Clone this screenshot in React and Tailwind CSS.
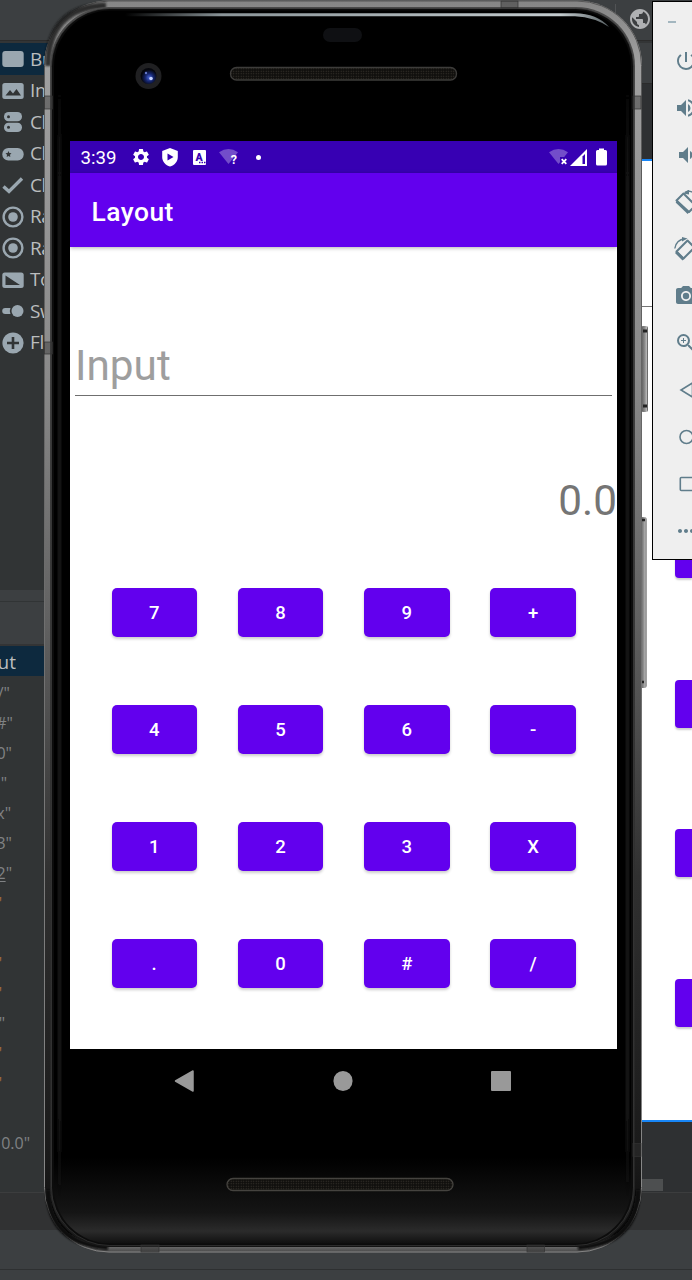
import React from "react";
import {
  MdPowerSettingsNew, MdVolumeUp, MdVolumeDown, MdPhotoCamera, MdZoomIn, MdMoreHoriz, MdPublic, MdSettings,
} from "react-icons/md";

const C = "#9aa7b0";
const BG = "#313435";

const Glyph = ({ kind }) => (
  <svg width="22" height="24" viewBox="0 0 22 24" className="shrink-0" fill={C}>
    {kind === "button" && <rect x="0.3" y="4" width="21.4" height="16" rx="3" />}
    {kind === "image" && (
      <>
        <rect x="0.3" y="4" width="21.4" height="16" rx="2.5" />
        <path d="M3.500 16.500L8 11l3 3.500 3.500-4.500 4.500 6.500z" fill={BG} />
      </>
    )}
    {kind === "group" && (
      <>
        <rect x="2" y="2" width="18" height="9.300" rx="4.600" />
        <rect x="2" y="12.700" width="18" height="9.300" rx="4.600" />
        <circle cx="6.500" cy="6.700" r="1.500" fill={BG} />
        <circle cx="6.500" cy="17.300" r="1.500" fill={BG} />
      </>
    )}
    {kind === "chip" && (
      <>
        <rect x="0.3" y="6" width="21.4" height="12.500" rx="6" />
        <path d="M6.5 9l.9 2 2.1.3-1.500 1.500.3 2.200-1.800-1-1.800 1 .3-2.200-1.500-1.500 2.100-.3z" fill={BG} />
      </>
    )}
    {kind === "check" && <path d="M1.500 13.500L7 18.500 20 5.500" fill="none" stroke={C} strokeWidth="3.400" />}
    {kind === "radio" && (
      <>
        <circle cx="11" cy="12" r="9.400" fill="none" stroke={C} strokeWidth="2.400" />
        <circle cx="11" cy="12" r="4.800" />
      </>
    )}
    {kind === "toggle" && (
      <>
        <rect x="0.3" y="4.500" width="21.4" height="15.500" rx="2.500" />
        <path d="M3.500 7.500v9.500H18z" fill={BG} />
      </>
    )}
    {kind === "switch" && (
      <>
        <path d="M3.200 9H8.500a7 7 0 0 0 0 6H3.200a3 3 0 0 1 0-6z" />
        <circle cx="15.500" cy="12" r="6" />
      </>
    )}
    {kind === "fab" && (
      <>
        <circle cx="11" cy="12" r="10.600" />
        <path d="M11 6v12M5 12h12" stroke={BG} strokeWidth="2.600" />
      </>
    )}
  </svg>
);

const palette = [
  ["button", "Button"], ["image", "ImageButton"], ["group", "ChipGroup"], ["chip", "Chip"], ["check", "CheckBox"],
  ["radio", "RadioGroup"], ["radio", "RadioButton"], ["toggle", "ToggleButton"], ["switch", "Switch"], ["fab", "FloatingActionButton"],
];

const Attr = ({ w, color = "text-[#808284]", children }) => (
  <div className="flex h-[30.05px] items-center">
    <div className={`flex shrink-0 justify-end overflow-hidden ${w} ${color}`}>{children}</div>
  </div>
);

const LeftPane = () => (
  <div className="flex w-[320px] shrink-0 flex-col bg-[#313435] font-['Open_Sans',sans-serif]">
    <div className="h-[547px] overflow-hidden">
      {palette.map(([k, label], i) => (
        <div key={i} className={`flex h-[31.5px] items-center gap-[6px] pt-px pl-[2px] text-[19px] text-[#bbbdbe] ${i === 0 ? "bg-[#0d293e]" : ""}`}>
          <Glyph kind={k} />
          <span className="-mt-px tracking-[-0.02em]">{label}</span>
        </div>
      ))}
    </div>
    <div className="h-[11px] bg-[#3c3f41]" />
    <div className="h-px bg-[#313435]" />
    <div className="h-[42px] bg-[#3c3f41]" />
    <div className="h-[2px] bg-[#333435]" />
    <div className="flex h-[30px] items-center bg-[#0d293e] pt-[2px] text-[19px] text-[#bbbdbe]">
      <div className="flex w-[16px] justify-end overflow-hidden">layout</div>
    </div>
    <div className="pt-[1.500px] text-[16px] leading-[30px]">
      <Attr w="w-[10px]">/"</Attr>
      <Attr w="w-[13px]">#"</Attr>
      <Attr w="w-[12px]">0"</Attr>
      <Attr w="w-[7px]">"</Attr>
      <Attr w="w-[11px]">x"</Attr>
      <Attr w="w-[12px]">3"</Attr>
      <Attr w="w-[12px]"><span className="underline underline-offset-2">2</span>"</Attr>
      <Attr w="w-[2px]" color="text-[#a06b3c]">"</Attr>
      <Attr w="w-0" />
      <Attr w="w-[2px]" color="text-[#a06b3c]">"</Attr>
      <Attr w="w-[2px]" color="text-[#a06b3c]">"</Attr>
      <Attr w="w-[5px]">"</Attr>
      <Attr w="w-[2px]" color="text-[#a06b3c]">"</Attr>
      <Attr w="w-[2px]" color="text-[#a06b3c]">"</Attr>
      <Attr w="w-0" />
      <Attr w="w-[30px]">0.0"</Attr>
    </div>
  </div>
);

const RightPane = () => (
  <div className="flex flex-1 flex-col bg-[#2e3032]">
    <div className="h-[40px] bg-[#3c3f41]" />
    <div className="h-px bg-[#2b2b2b]" />
    <div className="h-[75px]" />
    <div className="h-[2px] bg-[#1886f7]" />
    <div className="flex h-[959px] flex-col items-end bg-white">
      <div className="mt-[145px] h-px w-full bg-[#757575]" />
      <div className="mt-[223px] flex flex-col gap-[101.500px]">
        {[0, 1, 2, 3].map((i) => (
          <div key={i} className="h-[48px] w-[17px] rounded-l-[4px] bg-[#6200ee] shadow-[0_2px_2px_rgba(0,0,0,0.2)]" />
        ))}
      </div>
    </div>
    <div className="h-[2px] bg-[#1886f7]" />
    <div className="flex-1 pt-[57px] pl-[321px]">
      <div className="h-[12px] w-[22px] bg-[#4d4f50]" />
    </div>
  </div>
);

const Ide = () => (
  <div className="flex h-[1280px] w-[692px] flex-col overflow-hidden bg-[#3c3f41]">
    <div className="flex h-[40px] items-start justify-end">
      <div className="mt-[4px] mr-[12px] h-[28px] w-px bg-[#515355]" />
      <MdPublic size={24} color="#afb1b3" className="mt-[7px] mr-[40px]" />
    </div>
    <div className="h-[3px] border-t border-[#2b2b2b] bg-[#333536]" />
    <div className="flex h-[1149px]">
      <LeftPane />
      <RightPane />
    </div>
    <div className="h-px bg-[#3c3d3e]" />
    <div className="h-[37px] bg-[#313233]" />
    <div className="h-[39px]" />
    <div className="h-px bg-[#2e3031]" />
  </div>
);

const Shell = () => (
  <svg className="absolute inset-0" width="608" height="1256" viewBox="44 0 608 1256">
    <defs>
      <linearGradient id="rim" x1="0" y1="0" x2="0" y2="1">
        <stop offset="0" stopColor="#858585" />
        <stop offset="0.05" stopColor="#a0a0a0" />
        <stop offset="0.3" stopColor="#8a8a8a" />
        <stop offset="0.5" stopColor="#606060" />
        <stop offset="0.7" stopColor="#303030" />
        <stop offset="0.93" stopColor="#191919" />
        <stop offset="0.985" stopColor="#0c0c0c" />
        <stop offset="0.995" stopColor="#6e6e6e" />
        <stop offset="1" stopColor="#444" />
      </linearGradient>
      <linearGradient id="edge" x1="0" y1="0" x2="0" y2="1">
        <stop offset="0" stopColor="#555" />
        <stop offset="1" stopColor="#8a8a8a" />
      </linearGradient>
      <linearGradient id="inner" x1="0" y1="0" x2="0" y2="1">
        <stop offset="0" stopColor="#4a4a4a" />
        <stop offset="0.6" stopColor="#333" />
        <stop offset="0.97" stopColor="#242424" />
        <stop offset="1" stopColor="#141414" />
      </linearGradient>
      <linearGradient id="glass" x1="0" y1="0" x2="0" y2="1">
        <stop offset="0.93" stopColor="#000" />
        <stop offset="0.975" stopColor="#151515" />
        <stop offset="0.990" stopColor="#2b2b2b" />
        <stop offset="1" stopColor="#101010" />
      </linearGradient>
      <linearGradient id="streak" x1="0" y1="75" x2="0" y2="1200" gradientUnits="userSpaceOnUse">
        <stop offset="0" stopColor="#1b1b1b" stopOpacity="0" />
        <stop offset="0.1" stopColor="#1b1b1b" />
        <stop offset="0.92" stopColor="#1b1b1b" />
        <stop offset="1" stopColor="#1b1b1b" stopOpacity="0" />
      </linearGradient>
      <linearGradient id="shine" x1="0" y1="0" x2="1" y2="0">
        <stop offset="0" stopColor="#8b9599" stopOpacity="0" />
        <stop offset="0.2" stopColor="#8b9599" />
        <stop offset="0.9" stopColor="#c3cbce" />
        <stop offset="1" stopColor="#5a6366" />
      </linearGradient>
      <linearGradient id="key" x1="0" y1="0" x2="1" y2="0">
        <stop offset="0" stopColor="#555" />
        <stop offset="0.5" stopColor="#888" />
        <stop offset="0.8" stopColor="#b5b5b5" />
        <stop offset="1" stopColor="#444" />
      </linearGradient>
      <radialGradient id="lens" cx="0.55" cy="0.6">
        <stop offset="0" stopColor="#4865d8" />
        <stop offset="0.5" stopColor="#15256e" />
        <stop offset="1" stopColor="#05060c" />
      </radialGradient>
      <pattern id="mesh" width="2.500" height="2.500" patternUnits="userSpaceOnUse">
        <rect width="2.500" height="2.500" fill="#100f0d" />
        <circle cx="1.200" cy="1.200" r="0.650" fill="#3a362f" />
      </pattern>
      <filter id="soft" filterUnits="userSpaceOnUse" x="40" y="0" width="612" height="1260"><feGaussianBlur stdDeviation="1.200" /></filter>
    </defs>
    <rect x="641" y="326" width="7" height="86" rx="2" fill="url(#key)" />
    <path d="M643 331h4M643 406h4" stroke="#222" strokeWidth="3" />
    <rect x="640" y="517" width="6.500" height="171" rx="2" fill="url(#key)" />
    <path d="M641 520h4M641 682h3" stroke="#222" strokeWidth="2.500" />
    <rect x="44" y="0.500" width="598" height="1252" rx="65" fill="url(#rim)" />
    <rect x="44.500" y="1" width="597" height="1251" rx="64.500" fill="none" stroke="url(#edge)" />
    <path d="M48 66Q48 7 106 5.500" fill="none" stroke="#151515" strokeWidth="6" filter="url(#soft)" opacity="0.8" />
    <path d="M48 1190Q49 1244 108 1247.500M638 1190Q637 1244 578 1247.500" fill="none" stroke="#080808" strokeWidth="5" filter="url(#soft)" />
    <rect x="50" y="7" width="585" height="1240" rx="59" fill="url(#inner)" />
    <rect x="51.500" y="8.500" width="582" height="1237" rx="58" fill="#0c0c0c" stroke="#555" strokeOpacity="0.6" strokeWidth="0.700" />
    <rect x="54" y="10.500" width="577" height="1233" rx="56" fill="url(#glass)" />
    <path d="M58 75h3v1125h-3zM626 75h3v1125h-3z" fill="url(#streak)" filter="url(#soft)" />
    <path d="M125 13.300H575Q597 13.500 609 27Q595 17.500 575 16.300H125z" fill="url(#shine)" />
    <g fill="#333" fillOpacity="0.450" stroke="#333" strokeWidth="0.700">
      <rect x="44.500" y="96" width="8" height="13" /><rect x="44.500" y="342" width="8" height="12" />
      <rect x="633" y="96" width="8" height="13" /><rect x="501" y="1" width="17" height="7" />
      <rect x="633" y="1143.500" width="8" height="13" /><rect x="141" y="1245" width="18" height="7" />
      <rect x="527" y="1245" width="17.500" height="7" />
    </g>
    <rect x="323" y="28" width="39" height="14" rx="7" fill="#0f1013" />
    <circle cx="148.500" cy="76" r="13" fill="#202022" />
    <circle cx="148.500" cy="76" r="8" fill="url(#lens)" />
    <circle cx="151" cy="78.500" r="1.800" fill="#c5d2ff" /><circle cx="146" cy="73" r="1.200" fill="#6478c8" />
    <rect x="230.500" y="67.500" width="226" height="12.500" rx="6" fill="url(#mesh)" stroke="#3d3c3a" strokeWidth="1.300" />
    <rect x="227" y="1178.500" width="226" height="12" rx="6" fill="url(#mesh)" stroke="#45433f" strokeWidth="1.300" />
  </svg>
);

const WifiFan = ({ mark }) => (
  <svg width="20" height="18" viewBox="0 0 20 18" className="shrink-0">
    <path d="M0 4.200Q9.500-2.300 19 4.200L9.500 16z" fill="#fff" fillOpacity="0.300" />
    {mark === "x" ? (
      <>
        <rect x="11" y="9" width="9" height="9" fill="#3700b3" />
        <path d="M12.700 11.200l4.600 4.600M17.300 11.200l-4.600 4.600" stroke="#fff" strokeWidth="1.800" />
      </>
    ) : (
      <text x="11.800" y="16" fill="#fff" fontFamily="Roboto" fontWeight="700" fontSize="12.500">?</text>
    )}
  </svg>
);

const StatusBar = () => (
  <div className="flex h-[32px] items-center bg-[#3700b3] pl-[10.500px] text-white">
    <span className="w-[51.500px] pt-[2px] text-[18.700px]">3:39</span>
    <MdSettings size={20} className="-ml-px shrink-0" />
    <svg width="16" height="19" viewBox="0 0 16 19" className="ml-[11px]">
      <path d="M8 0l7.800 3v6c0 4.500-3.300 8.300-7.800 9.500C3.500 17.300.2 13.500.2 9V3z" fill="#fff" />
      <path d="M5.500 5.500v7L11.500 9z" fill="#3700b3" />
    </svg>
    <svg width="13" height="15" viewBox="0 0 13 15" className="ml-[15px]">
      <rect width="13" height="15" rx="1" fill="#fff" />
      <text x="2.500" y="10.500" fontFamily="Roboto" fontWeight="900" fontSize="10.500" fill="#3700b3">A</text>
      <path d="M6 12.500h1.500M8.500 12.500H10M11 12.500h1.500" stroke="#3700b3" strokeWidth="1.400" />
    </svg>
    <div className="ml-[13px]"><WifiFan mark="?" /></div>
    <div className="ml-[17px] size-[5px] rounded-full bg-white" />
    <div className="ml-auto flex items-center pr-[10.500px]">
      <WifiFan mark="x" />
      <svg width="17" height="17" viewBox="0 0 17 17" className="ml-px">
        <path d="M17 0v17H0z" fill="#fff" />
        <path d="M12.500 7.500l2.500-2.500v10h-2.500z" fill="#3700b3" />
      </svg>
      <svg width="11" height="18" viewBox="0 0 11 18" className="ml-[9px]">
        <path d="M3 0.500h5V2H9.500Q11 2 11 3.500V16Q11 17.500 9.500 17.500H1.500Q0 17.500 0 16V3.500Q0 2 1.500 2H3z" fill="#fff" />
      </svg>
    </div>
  </div>
);

const keys = ["7", "8", "9", "+", "4", "5", "6", "-", "1", "2", "3", "X", ".", "0", "#", "/"];

const Screen = () => (
  <div className="flex h-[908px] w-[547px] flex-col bg-white font-[Roboto,sans-serif]">
    <StatusBar />
    <div className="flex h-[74px] shrink-0 items-center bg-[#6200ee] pt-[4px] pl-[21.500px] text-[26.400px] leading-none font-medium tracking-[0.018em] text-white shadow-[0_1px_4px_rgba(0,0,0,0.3)]">
      Layout
    </div>
    <div className="mx-[5px] mt-[88px] flex h-[61px] items-center border-b border-[#6f6f6f] pt-[2px] text-[42.300px] leading-none text-[#9e9e9e]">
      Input
    </div>
    <div className="mt-[79px] flex h-[52px] items-center justify-end text-[42.300px] leading-none text-[#757575]">0.0</div>
    <div className="mt-[61px] grid grid-cols-[repeat(4,85.500px)] gap-x-[40.800px] gap-y-[68.200px] pl-[41.500px]">
      {keys.map((k) => (
        <button key={k} className="flex h-[48.900px] items-center justify-center rounded-[5px] bg-[#6200ee] pt-[2px] pl-[1.500px] text-[18.500px] font-medium tracking-[0.089em] text-white shadow-[0_2px_3px_rgba(0,0,0,0.2)]">
          {k}
        </button>
      ))}
    </div>
  </div>
);

const Phone = () => (
  <div className="absolute top-0 left-[44px] h-[1256px] w-[608px]">
    <Shell />
    <div className="relative pt-[141px] pl-[26px]">
      <Screen />
      <div className="flex h-[64px] w-[547px] items-center justify-between pr-[106px] pl-[104px]">
        <svg width="20" height="22" viewBox="0 0 20 22"><path d="M19 1v20L1.500 11z" fill="#999" stroke="#999" strokeWidth="1.500" strokeLinejoin="round" /></svg>
        <div className="size-[19.500px] translate-x-[0.500px] rounded-full bg-[#999]" />
        <div className="size-[20px] rounded-[1px] bg-[#999]" />
      </div>
    </div>
  </div>
);

const Slot = ({ children }) => <div className="flex h-[46.950px] w-[24px] shrink-0 items-center justify-center">{children}</div>;

const Toolbar = () => (
  <div className="absolute top-px left-[652px] flex h-[559px] w-[40px] flex-col overflow-hidden border-y border-l border-black bg-[#efefef] text-[#607d8b]">
    <div className="mt-[19px] ml-[15px] h-[2px] w-[8px] shrink-0 bg-[#a3b6bf]" />
    <div className="mt-[15px] ml-[21px]">
      <Slot><MdPowerSettingsNew size={24} /></Slot>
      <Slot><MdVolumeUp size={24} /></Slot>
      <Slot><MdVolumeDown size={24} /></Slot>
      <Slot>
        <svg width="24" height="24" viewBox="0 0 24 24" fill="none" stroke="currentColor">
          <path d="M2.500 10.500L9.500 3.500 21.500 15.500 15 22z" strokeWidth="2" strokeLinejoin="round" />
          <path d="M2.500 11.500L14.500 23" strokeWidth="2.500" />
          <path d="M11 2.500Q18-1 21.500 6" strokeWidth="1.500" />
          <path d="M9 3.500L15-.5v5z" fill="currentColor" stroke="none" />
        </svg>
      </Slot>
      <Slot>
        <svg width="24" height="24" viewBox="0 0 24 24" fill="none" stroke="currentColor">
          <path d="M2.500 14.500L13.500 3.500 20.500 10.500 9.500 21.500z" strokeWidth="2" strokeLinejoin="round" />
          <path d="M2 15L9.500 22.500" strokeWidth="2.800" />
          <path d="M.8 11.500Q2 3 11 1.800" strokeWidth="1.400" />
          <path d="M8 0l5.500 1.500L8 4.500z" fill="currentColor" stroke="none" />
        </svg>
      </Slot>
      <Slot><MdPhotoCamera size={24} /></Slot>
      <Slot><MdZoomIn size={24} /></Slot>
      <Slot><svg width="24" height="24" fill="none" stroke="currentColor" strokeWidth="1.600"><path d="M18.500 5v14L7 12z" /></svg></Slot>
      <Slot><svg width="24" height="24" fill="none" stroke="currentColor" strokeWidth="1.600"><circle cx="12.500" cy="12" r="6.500" /></svg></Slot>
      <Slot><svg width="24" height="24" fill="none" stroke="currentColor" strokeWidth="1.600"><rect x="6.300" y="5.500" width="13" height="13" rx="1" /></svg></Slot>
      <Slot><MdMoreHoriz size={24} /></Slot>
    </div>
  </div>
);

export default function App() {
  return (
    <div className="relative h-[1280px] w-[692px] overflow-hidden">
      <Ide />
      <Phone />
      <Toolbar />
    </div>
  );
}
